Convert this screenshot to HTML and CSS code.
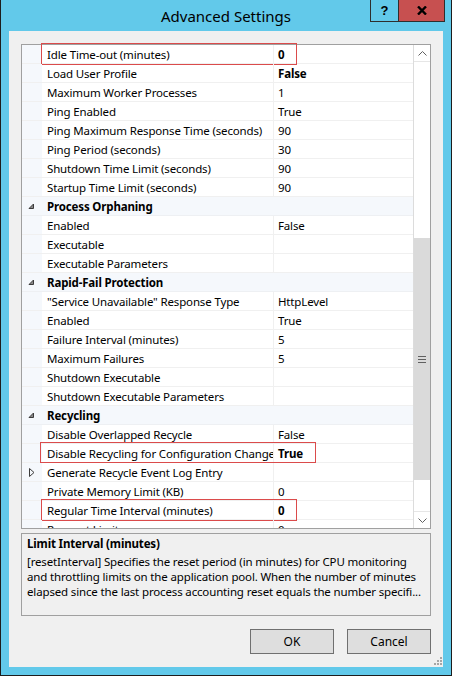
FILE: index.html
```html
<!DOCTYPE html>
<html lang="en">

<head>
    <meta charset="UTF-8">
    <title>Advanced Settings</title>
    <link rel="stylesheet" href="styles.css">
</head>

<body>
    <div class="window">
        <div class="titlebar">
            <span></span>
            <h1 class="title">Advanced Settings</h1>
            <div class="caption-buttons">
                <span class="cap-btn help">?</span>
                <span class="cap-btn close">
                    <svg width="10" height="9" viewBox="0 0 10 9">
                        <path d="M1 0.5 L9 8.5 M9 0.5 L1 8.5" stroke="#000" stroke-width="2.4" fill="none" />
                    </svg>
                </span>
            </div>
        </div>

        <div class="client">
            <div class="grid">
                <div class="rows">
                    <div class="row">
                        <span class="gutter"></span>
                        <span class="name">Idle Time-out (minutes)</span>
                        <span class="value bold">0</span>
                        <span class="mark mark-short"></span>
                    </div>
                    <div class="row"><span class="gutter"></span><span class="name">Load User Profile</span><span class="value bold">False</span></div>
                    <div class="row"><span class="gutter"></span><span class="name">Maximum Worker Processes</span><span class="value">1</span></div>
                    <div class="row"><span class="gutter"></span><span class="name">Ping Enabled</span><span class="value">True</span></div>
                    <div class="row"><span class="gutter"></span><span class="name">Ping Maximum Response Time (seconds)</span><span class="value">90</span></div>
                    <div class="row"><span class="gutter"></span><span class="name">Ping Period (seconds)</span><span class="value">30</span></div>
                    <div class="row"><span class="gutter"></span><span class="name">Shutdown Time Limit (seconds)</span><span class="value">90</span></div>
                    <div class="row"><span class="gutter"></span><span class="name">Startup Time Limit (seconds)</span><span class="value">90</span></div>

                    <div class="row category">
                        <span class="gutter"><svg class="expanded" width="7" height="7" viewBox="0 0 7 7"><path d="M5.5 1 L5.5 5.5 L1 5.5 Z" fill="#8a8a8a" stroke="#3c3c3c" stroke-width="1" /></svg></span>
                        <span class="name">Process Orphaning</span>
                    </div>
                    <div class="row"><span class="gutter"></span><span class="name">Enabled</span><span class="value">False</span></div>
                    <div class="row"><span class="gutter"></span><span class="name">Executable</span><span class="value"></span></div>
                    <div class="row"><span class="gutter"></span><span class="name">Executable Parameters</span><span class="value"></span></div>

                    <div class="row category">
                        <span class="gutter"><svg class="expanded" width="7" height="7" viewBox="0 0 7 7"><path d="M5.5 1 L5.5 5.5 L1 5.5 Z" fill="#8a8a8a" stroke="#3c3c3c" stroke-width="1" /></svg></span>
                        <span class="name">Rapid-Fail Protection</span>
                    </div>
                    <div class="row"><span class="gutter"></span><span class="name">"Service Unavailable" Response Type</span><span class="value">HttpLevel</span></div>
                    <div class="row"><span class="gutter"></span><span class="name">Enabled</span><span class="value">True</span></div>
                    <div class="row"><span class="gutter"></span><span class="name">Failure Interval (minutes)</span><span class="value">5</span></div>
                    <div class="row"><span class="gutter"></span><span class="name">Maximum Failures</span><span class="value">5</span></div>
                    <div class="row"><span class="gutter"></span><span class="name">Shutdown Executable</span><span class="value"></span></div>
                    <div class="row"><span class="gutter"></span><span class="name">Shutdown Executable Parameters</span><span class="value"></span></div>

                    <div class="row category">
                        <span class="gutter"><svg class="expanded" width="7" height="7" viewBox="0 0 7 7"><path d="M5.5 1 L5.5 5.5 L1 5.5 Z" fill="#8a8a8a" stroke="#3c3c3c" stroke-width="1" /></svg></span>
                        <span class="name">Recycling</span>
                    </div>
                    <div class="row"><span class="gutter"></span><span class="name">Disable Overlapped Recycle</span><span class="value">False</span></div>
                    <div class="row">
                        <span class="gutter"></span>
                        <span class="name">Disable Recycling for Configuration Changes</span>
                        <span class="value bold">True</span>
                        <span class="mark mark-long"></span>
                    </div>
                    <div class="row">
                        <span class="gutter"><svg width="6" height="9" viewBox="0 0 6 9"><path d="M0.5 0.5 L5 4.5 L0.5 8.5 Z" fill="none" stroke="#3c3c3c" stroke-width="1" /></svg></span>
                        <span class="name">Generate Recycle Event Log Entry</span>
                        <span class="value"></span>
                    </div>
                    <div class="row"><span class="gutter"></span><span class="name">Private Memory Limit (KB)</span><span class="value">0</span></div>
                    <div class="row">
                        <span class="gutter"></span>
                        <span class="name">Regular Time Interval (minutes)</span>
                        <span class="value bold">0</span>
                        <span class="mark mark-short"></span>
                    </div>
                    <div class="row"><span class="gutter"></span><span class="name">Request Limit</span><span class="value">0</span></div>
                </div>

                <div class="scrollbar">
                    <div class="arrow arrow-up">
                        <svg width="9" height="5" viewBox="0 0 9 5"><path d="M0.5 4.5 L4.5 0.5 L8.5 4.5" fill="none" stroke="#606060" stroke-width="1" /></svg>
                    </div>
                    <div class="track">
                        <div class="thumb"><span class="grip"></span></div>
                    </div>
                    <div class="arrow arrow-down">
                        <svg width="9" height="5" viewBox="0 0 9 5"><path d="M0.5 0.5 L4.5 4.5 L8.5 0.5" fill="none" stroke="#606060" stroke-width="1" /></svg>
                    </div>
                </div>
            </div>

            <div class="description">
                <div class="desc-title">Limit Interval (minutes)</div>
                <div class="desc-line">[resetInterval] Specifies the reset period (in minutes) for CPU monitoring</div>
                <div class="desc-line">and throttling limits on the application pool. When the number of minutes</div>
                <div class="desc-line">elapsed since the last process accounting reset equals the number specifi...</div>
            </div>

            <div class="actions">
                <button class="btn">OK</button>
                <button class="btn">Cancel</button>
            </div>

            <svg class="size-grip" width="8" height="8" viewBox="0 0 8 8">
                <rect x="6" y="0" width="2" height="2" fill="#a6a6a6" />
                <rect x="3" y="3" width="2" height="2" fill="#a6a6a6" />
                <rect x="6" y="3" width="2" height="2" fill="#a6a6a6" />
                <rect x="0" y="6" width="2" height="2" fill="#a6a6a6" />
                <rect x="3" y="6" width="2" height="2" fill="#a6a6a6" />
                <rect x="6" y="6" width="2" height="2" fill="#a6a6a6" />
            </svg>
        </div>
    </div>
</body>

</html>
```

FILE: styles.css
```css
* {
    box-sizing: border-box;
}

body {
    margin: 0;
    font-family: "Noto Sans", sans-serif;
    font-size: 11.5px;
    letter-spacing: -0.15px;
    color: #000;
}

.window {
    width: 452px;
    height: 676px;
    background: #62c9ea;
    border: 1px solid #1d1d1d;
    border-top: 0;
    display: flex;
    flex-direction: column;
}

/* title bar */

.titlebar {
    height: 31px;
    flex: none;
    display: grid;
    grid-template-columns: 1fr auto 1fr;
    align-items: start;
    padding: 0 6px;
}

.title {
    margin: 0;
    font-size: 15px;
    font-weight: normal;
    letter-spacing: 0;
    line-height: 32px;
    white-space: nowrap;
}

.caption-buttons {
    justify-self: end;
    display: flex;
}

.cap-btn {
    height: 22px;
    display: flex;
    align-items: center;
    justify-content: center;
    border: 1px solid #2e2e2e;
    border-top: 0;
}

.help {
    width: 28px;
    border-right: 0;
    font-weight: bold;
    font-size: 13px;
    font-family: "Liberation Sans", sans-serif;
}

.close {
    width: 47px;
    background: #c75050;
}

/* client area */

.client {
    flex: 1;
    margin: 0 8px 8px;
    background: #f0f0f0;
    padding: 13px 12px;
    display: flex;
    flex-direction: column;
    position: relative;
}

.grid {
    height: 485px;
    flex: none;
    border: 1px solid #a0a0a0;
    display: flex;
    background: #fff;
}

/* clip below and at the sides, but let the marks reach over the top border */
.rows {
    flex: 1;
    clip-path: inset(-3px 0 0 0);
}

.row {
    position: relative;
    height: 19px;
    display: grid;
    grid-template-columns: 20px 232px 1fr;
    border-bottom: 1px solid #f0f0f0;
    line-height: 19px;
}

.gutter {
    background: #f5f8fc;
    display: flex;
    align-items: center;
    justify-content: center;
}

.name {
    padding-left: 5px;
    border-right: 1px solid #f0f0f0;
    white-space: nowrap;
    overflow: hidden;
}

.value {
    padding-left: 4px;
    white-space: nowrap;
    overflow: hidden;
}

.bold {
    font-weight: bold;
}

.category {
    background: #f5f8fc;
    border-bottom-color: #eef0f3;
}

.category .name {
    grid-column: 2 / 4;
    border-right: 0;
    font-weight: bold;
}

.expanded {
    margin-left: -2px;
}

/* highlight boxes around changed settings */

.mark {
    position: absolute;
    border: 1px solid #db4b4b;
    top: -2px;
    height: 22px;
    pointer-events: none;
}

.mark-short {
    left: 19px;
    width: 256px;
}

.mark-long {
    left: 18px;
    width: 276px;
    height: 21px;
}

/* scrollbar */

.scrollbar {
    width: 17px;
    flex: none;
    display: flex;
    flex-direction: column;
    border-left: 1px solid #dcdcdc;
    background: #fff;
}

.arrow {
    height: 17px;
    display: flex;
    align-items: center;
    justify-content: center;
}

.arrow-up {
    border-bottom: 1px solid #e6e6e6;
}

.arrow-down {
    border-top: 1px solid #e6e6e6;
}

.track {
    flex: 1;
}

.thumb {
    margin-top: 176px;
    height: 242px;
    background: #dadada;
    display: flex;
    align-items: center;
    justify-content: center;
}

.grip {
    width: 8px;
    height: 7px;
    border-top: 1px solid #606060;
    border-bottom: 1px solid #606060;
    position: relative;
}

.grip::after {
    content: "";
    position: absolute;
    left: 0;
    right: 0;
    top: 2px;
    border-top: 1px solid #606060;
}

/* description panel */

.description {
    margin-top: 4px;
    height: 83px;
    flex: none;
    border: 1px solid #a0a0a0;
    padding: 2px 5px;
    line-height: 15px;
}

.desc-title {
    font-weight: bold;
    margin-bottom: 3px;
}

.desc-line {
    white-space: nowrap;
}

/* dialog buttons */

.actions {
    margin-top: 13px;
    display: flex;
    justify-content: flex-end;
    gap: 13px;
}

.btn {
    width: 84px;
    height: 25px;
    border: 1px solid #707070;
    background: #dedede;
    font-family: inherit;
    font-size: 12px;
    letter-spacing: 0;
    color: #000;
    padding: 0;
}

.size-grip {
    position: absolute;
    right: 1px;
    bottom: 2px;
}
```
